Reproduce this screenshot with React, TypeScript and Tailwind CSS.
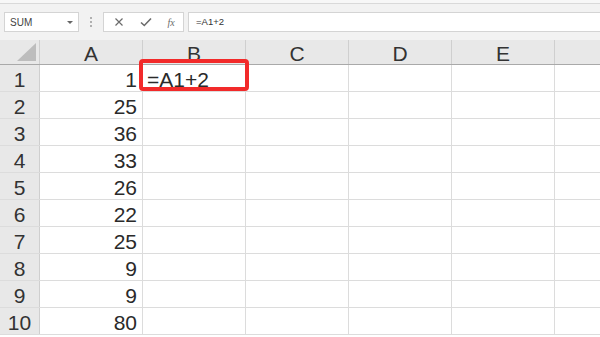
import React from 'react';

const cols = ['A', 'B', 'C', 'D', 'E', ''];
const values = [1, 25, 36, 33, 26, 22, 25, 9, 9, 80];

function XIcon() {
  return (
    <svg width="10" height="10" viewBox="0 0 10 10" className="text-[#6b6b6b]">
      <path d="M1.5 1.5 L8.5 8.5 M8.5 1.5 L1.5 8.5" stroke="currentColor" strokeWidth="1.2" fill="none" />
    </svg>
  );
}

function CheckIcon() {
  return (
    <svg width="12" height="10" viewBox="0 0 12 10" className="text-[#6b6b6b]">
      <path d="M1 5.5 L4.3 8.5 L11 1.5" stroke="currentColor" strokeWidth="1.6" fill="none" />
    </svg>
  );
}

export default function App() {
  return (
    <div className="w-[600px] h-[337px] overflow-hidden bg-white font-['Liberation_Sans',Arial,sans-serif] text-[#2a2a2a]">
      {/* top strip */}
      <div className="h-[4px] bg-[#f7f7f7] border-b border-[#d9d9d9]" />

      {/* name box + formula bar */}
      <div className="h-[36px] bg-[#f2f2f2] flex items-start pt-[8px] pl-[4px]">
        <div className="w-[75px] h-[20px] bg-white border border-[#d4d4d4] flex items-center justify-between pl-[5px] pr-[5px]">
          <span className="text-[10px] text-[#444]">SUM</span>
          <span className="w-0 h-0 border-l-[3px] border-r-[3px] border-t-[3px] border-l-transparent border-r-transparent border-t-[#666]" />
        </div>
        <div className="w-[24px] h-[20px] flex flex-col items-center justify-center gap-[2px]">
          <span className="w-[2px] h-[2px] bg-[#b0b0b0]" />
          <span className="w-[2px] h-[2px] bg-[#b0b0b0]" />
          <span className="w-[2px] h-[2px] bg-[#b0b0b0]" />
        </div>
        <div className="w-[81px] h-[20px] bg-white border border-[#d4d4d4] flex items-center">
          <div className="w-[28px] flex justify-center pl-[2px]"><XIcon /></div>
          <div className="w-[28px] flex justify-center"><CheckIcon /></div>
          <div className="w-[22px] flex justify-center text-[10px] italic text-[#6b6b6b] font-['Liberation_Serif',serif]">fx</div>
        </div>
        <div className="ml-[4px] flex-1 h-[20px] bg-white border border-[#d4d4d4] border-r-0 flex items-center pl-[7px]">
          <span className="text-[9.5px] text-[#333]">=A1+2</span>
        </div>
      </div>

      {/* grid */}
      <div className="relative">
        <div className="flex h-[25px] bg-[#e8e8e8] border-b border-[#a9a9a9]">
          <div className="w-[40px] shrink-0 border-r border-[#cfcfcf] flex items-end justify-end pr-[3px] pb-[3px]">
            <svg width="19" height="18" viewBox="0 0 19 18">
              <path d="M19 0 L19 18 L0 18 Z" fill="#bdbdbd" />
            </svg>
          </div>
          {cols.map((c, i) => (
            <div
              key={i}
              className="w-[103px] shrink-0 border-r border-[#cfcfcf] flex items-center justify-center text-[21px] leading-none text-[#333] pt-[3px]"
            >
              {c}
            </div>
          ))}
        </div>

        {values.map((v, r) => (
          <div key={r} className="flex h-[27px] border-b border-[#dcdcdc]">
            <div className="w-[40px] shrink-0 bg-[#e8e8e8] border-r border-[#cfcfcf] flex items-center justify-center text-[21px] leading-none text-[#333] pt-[3px]">
              {r + 1}
            </div>
            <div className="w-[103px] shrink-0 border-r border-[#dcdcdc] flex items-center justify-end pr-[5px] text-[21px] leading-none pt-[3px]">
              {v}
            </div>
            <div className="w-[103px] shrink-0 border-r border-[#dcdcdc] flex items-center pl-[4px] text-[21px] leading-none pt-[3px]">
              {r === 0 ? '=A1+2' : ''}
            </div>
            <div className="w-[103px] shrink-0 border-r border-[#dcdcdc]" />
            <div className="w-[103px] shrink-0 border-r border-[#dcdcdc]" />
            <div className="w-[103px] shrink-0 border-r border-[#dcdcdc]" />
            <div className="w-[103px] shrink-0" />
          </div>
        ))}

        {/* red highlight */}
        <div className="absolute left-[139px] top-[19px] w-[110px] h-[32px] border-[4px] border-[#f22a2a] rounded-[4px]" />
      </div>
    </div>
  );
}
